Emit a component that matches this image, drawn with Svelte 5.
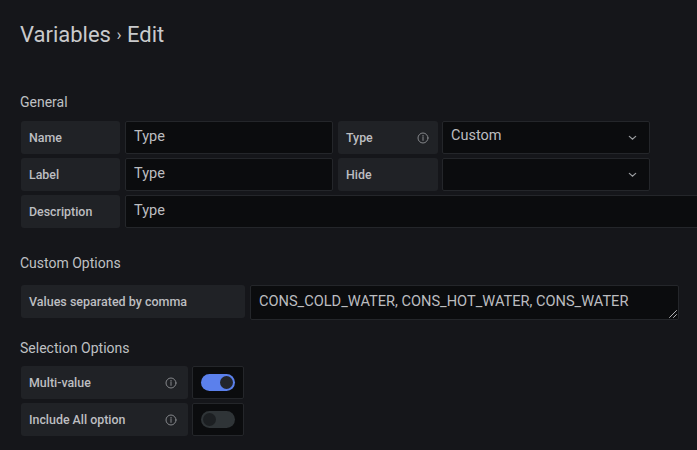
<script>
	const infoIcon = true;
</script>

<div class="page">
	<h1>Variables <span class="sep">›</span> Edit</h1>

	<h2 class="general">General</h2>
	<div class="rows">
		<div class="row">
			<div class="label name">Name</div>
			<div class="input text">Type</div>
			<div class="label type">
				Type
				{#if infoIcon}
					<svg class="info" viewBox="0 0 12 12"><circle cx="6" cy="6" r="5" /><path d="M6 5.4v3M6 3.4v.9" /></svg>
				{/if}
			</div>
			<div class="input select custom">
				Custom
				<svg class="chev" viewBox="0 0 10 6"><path d="M1.5 1.2 5 4.4l3.500-3.200" /></svg>
			</div>
		</div>
		<div class="row">
			<div class="label name">Label</div>
			<div class="input text">Type</div>
			<div class="label type">Hide</div>
			<div class="input select">
				<svg class="chev end" viewBox="0 0 10 6"><path d="M1.5 1.2 5 4.4l3.500-3.200" /></svg>
			</div>
		</div>
		<div class="row">
			<div class="label name">Description</div>
			<div class="input wide">Type</div>
		</div>
	</div>

	<h2 class="custom-title">Custom Options</h2>
	<div class="row">
		<div class="label values">Values separated by comma</div>
		<div class="input area">
			CONS_COLD_WATER, CONS_HOT_WATER, CONS_WATER
			<svg class="grip" viewBox="0 0 8 8"><path d="M7.500.5l-7 7M7.500 4.500l-3 3" /></svg>
		</div>
	</div>

	<h2 class="selection">Selection Options</h2>
	<div class="rows">
		<div class="row">
			<div class="label option">
				Multi-value
				<svg class="info" viewBox="0 0 12 12"><circle cx="6" cy="6" r="5" /><path d="M6 5.4v3M6 3.4v.9" /></svg>
			</div>
			<div class="input switch-box"><span class="switch on"><span class="knob"></span></span></div>
		</div>
		<div class="row">
			<div class="label option">
				Include All option
				<svg class="info" viewBox="0 0 12 12"><circle cx="6" cy="6" r="5" /><path d="M6 5.4v3M6 3.4v.9" /></svg>
			</div>
			<div class="input switch-box"><span class="switch"><span class="knob"></span></span></div>
		</div>
	</div>
</div>

<style>
	:global(body) {
		background: #15161a;
		overflow: hidden;
	}

	.page {
		width: 697px;
		height: 450px;
		box-sizing: border-box;
		padding: 22px 0 0 20px;
		overflow: hidden;
		font-family: Roboto, "Liberation Sans", sans-serif;
		color: #c7c8ca;
		background: #15161a;
	}

	h1 {
		margin: 0;
		height: 25px;
		font-size: 22px;
		line-height: 25px;
		font-weight: 400;
		color: #c9cacc;
	}

	.sep {
		font-size: 17px;
		vertical-align: 2px;
		color: #c9cacc;
	}

	h2 {
		margin: 0;
		font-size: 14px;
		line-height: 17px;
		font-weight: 400;
		color: #bfc0c3;
	}

	.general {
		margin-top: 47px;
		margin-bottom: 10px;
	}

	.custom-title {
		margin-top: 27px;
		margin-bottom: 13px;
	}

	.selection {
		margin-top: 22px;
		margin-bottom: 9px;
	}

	.rows {
		display: flex;
		flex-direction: column;
		gap: 4px;
	}

	.row {
		display: flex;
		gap: 5px;
		height: 33px;
		margin-left: 1px;
	}

	.label {
		display: flex;
		align-items: center;
		justify-content: space-between;
		box-sizing: border-box;
		padding: 0 9px 0 8px;
		flex: none;
		background: #202226;
		border-radius: 3px;
		font-size: 12.400px;
		font-weight: 500;
		color: #bdbec1;
	}

	.name {
		width: 99px;
	}

	.type {
		width: 100px;
	}

	.values {
		width: 224px;
		font-size: 12.500px;
	}

	.option {
		width: 167px;
		padding-right: 11px;
	}

	.input {
		display: flex;
		align-items: center;
		box-sizing: border-box;
		flex: none;
		position: relative;
		padding: 0 0 2px 8px;
		background: #0b0c0e;
		border: 1px solid #24262a;
		border-radius: 2px;
		font-size: 14.500px;
		color: #bcbdc0;
	}

	.text {
		width: 208px;
	}

	.select {
		width: 208px;
		margin-left: -1px;
		justify-content: space-between;
		padding-right: 12px;
	}

	.custom {
		align-items: flex-start;
		padding-top: 5px;
	}

	.custom .chev {
		margin-top: 8px;
	}

	.chev.end {
		margin-left: auto;
		margin-top: 2px;
	}

	.wide {
		width: 640px;
	}

	.area {
		width: 429px;
		height: 35px;
		white-space: nowrap;
		padding-bottom: 3px;
		font-size: 14.600px;
	}

	.switch-box {
		width: 52px;
		margin-left: -1px;
		padding: 0;
		justify-content: center;
	}

	.switch {
		display: flex;
		align-items: center;
		box-sizing: border-box;
		width: 34px;
		height: 17px;
		padding: 2px;
		border-radius: 9px;
		background: #2f3437;
	}

	.switch .knob {
		width: 13px;
		height: 13px;
		border-radius: 50%;
		background: #1c1f22;
	}

	.switch.on {
		justify-content: flex-end;
		background: #5b80ec;
	}

	.switch.on .knob {
		background: #23252b;
	}

	svg {
		flex: none;
		fill: none;
		stroke-linecap: round;
	}

	.info {
		width: 12px;
		height: 12px;
		stroke: #85878b;
		stroke-width: 1;
	}

	.chev {
		width: 9px;
		height: 6px;
		stroke: #9a9c9f;
		stroke-width: 1.400;
	}

	.grip {
		position: absolute;
		right: 1px;
		bottom: 1px;
		width: 8px;
		height: 8px;
		stroke: #b4b5b7;
		stroke-width: 1;
	}
</style>
